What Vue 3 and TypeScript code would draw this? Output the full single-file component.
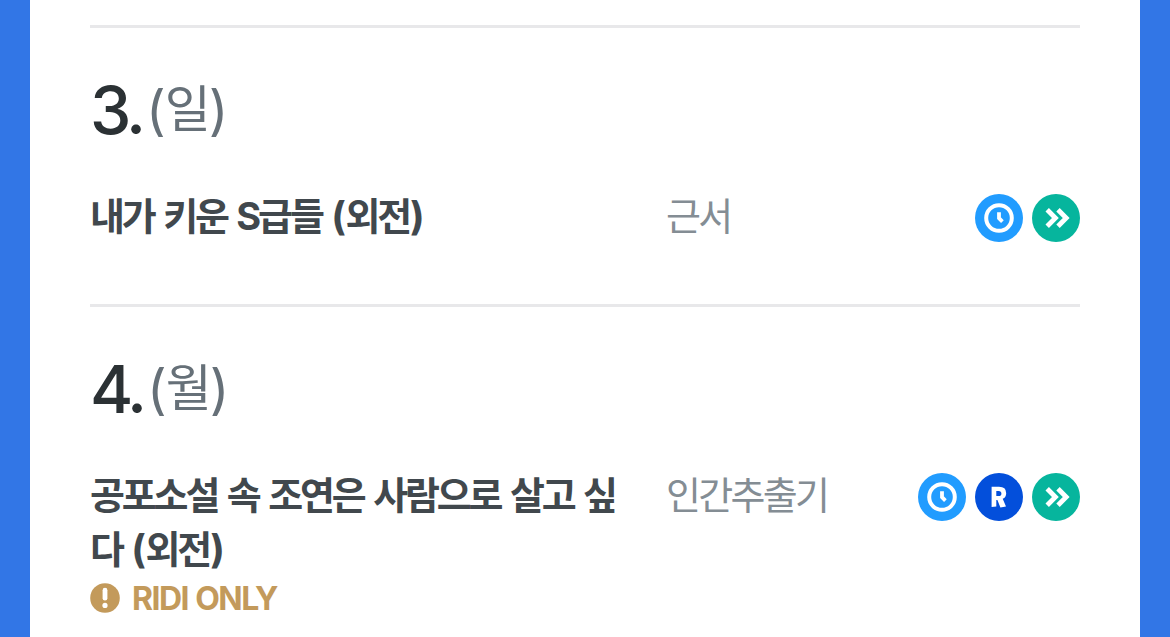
<script setup lang="ts">
type Platform = 'time' | 'ridi' | 'series'

interface Release {
  day: number
  weekday: string
  title: string
  part: string
  author: string
  platforms: Platform[]
  exclusive?: string
}

const releases: Release[] = [
  { day: 3, weekday: '일', title: '내가 키운 S급들', part: '외전', author: '근서', platforms: ['time', 'series'] },
  {
    day: 4,
    weekday: '월',
    title: '공포소설 속 조연은 사람으로 살고 싶다',
    part: '외전',
    author: '인간추출기',
    platforms: ['time', 'ridi', 'series'],
    exclusive: 'RIDI ONLY',
  },
]
</script>

<template>
  <main class="page">
    <section v-for="item in releases" :key="item.day" class="day">
      <h2 class="date">
        <span class="number">{{ item.day }}.</span>
        <span class="weekday"><span class="paren">(</span>{{ item.weekday }}<span class="paren">)</span></span>
      </h2>
      <div class="row">
        <div class="work">
          <h3 class="title">{{ item.title }} <span class="paren">(</span>{{ item.part }}<span class="paren">)</span></h3>
          <p v-if="item.exclusive" class="exclusive">
            <svg class="alert" viewBox="0 0 30 30" aria-hidden="true">
              <circle cx="15" cy="15" r="14.8" fill="#c39a5b" />
              <path d="M15 7.2V15.2" stroke="#fff" stroke-width="4.8" stroke-linecap="round" />
              <circle cx="15" cy="22.4" r="2.6" fill="#fff" />
            </svg>
            <span>{{ item.exclusive }}</span>
          </p>
        </div>
        <p class="author">{{ item.author }}</p>
        <div class="platforms">
          <svg v-for="p in item.platforms" :key="p" class="platform" viewBox="0 0 48 48" aria-hidden="true">
            <template v-if="p === 'time'">
              <circle cx="24" cy="24" r="24" fill="#219cff" />
              <circle cx="24" cy="24" r="12.8" fill="none" stroke="#fff" stroke-width="4" />
              <path d="M24 18.2V24.2L27.4 27.6" fill="none" stroke="#fff" stroke-width="3.8" />
            </template>
            <template v-else-if="p === 'ridi'">
              <circle cx="24" cy="24" r="24" fill="#034fdb" />
              <path d="M16.6 13.8H24Q31.2 13.8 31.2 20.2Q31.2 24.2 27.7 25.8L31 33.4L25.4 34.6L22.4 27H21.3V33.4L16.6 34ZM21.3 18V23.1H23.7Q26.4 23.1 26.4 20.5Q26.4 18 23.7 18Z" fill="#fff" fill-rule="evenodd" />
            </template>
            <template v-else>
              <circle cx="24" cy="24" r="24" fill="#06b59d" />
              <path d="M15.2 15.8L23.4 24L15.2 32.2M26 15.8L34.2 24L26 32.2" fill="none" stroke="#fff" stroke-width="4.8" />
            </template>
          </svg>
        </div>
      </div>
    </section>
  </main>
</template>

<style>
body {
  overflow: hidden;
}
</style>

<style scoped>
.page {
  box-sizing: border-box;
  height: 637px;
  padding: 25px 60px 0;
  border: solid #3276e6;
  border-width: 0 30px;
  background: #fff;
  overflow: hidden;
  font-family: Inter, "Noto Sans CJK KR", sans-serif;
}

.day {
  box-sizing: border-box;
  min-height: 279px;
  border-top: 3px solid #e8e8ea;
}

.date {
  display: flex;
  align-items: flex-start;
  height: 80px;
  margin: 42px 0 0;
  line-height: 80px;
  white-space: nowrap;
}

.number {
  color: #2b3134;
  font-size: 66px;
  font-weight: 500;
  letter-spacing: -4px;
}

.weekday {
  margin-left: 4px;
  color: #667078;
  font-size: 50px;
  font-weight: 400;
  letter-spacing: -2px;
  line-height: 78px;
}

.weekday .paren {
  font-size: 54px;
  font-weight: 400;
  letter-spacing: -1px;
  line-height: 1;
  vertical-align: -3px;
}

.row {
  display: grid;
  grid-template-columns: 576px 1fr auto;
  align-items: start;
  margin-top: 39px;
}

.title,
.author {
  margin: 0;
  font-size: 38px;
  line-height: 54px;
}

.title {
  width: 540px;
  color: #41484d;
  font-weight: 700;
  letter-spacing: -3.15px;
  word-spacing: 3.7px;
  word-break: break-all;
}

.title .paren {
  font-size: 39px;
  letter-spacing: -0.5px;
  line-height: 1;
}

.title .paren:last-child {
  margin-left: 1px;
}

.author {
  color: #848d94;
  font-weight: 400;
  letter-spacing: -2.7px;
}

.exclusive {
  display: flex;
  align-items: center;
  gap: 12px;
  height: 44px;
  margin: 0;
  color: #c39a5b;
  font-size: 32px;
  font-weight: 650;
  letter-spacing: -1.5px;
  word-spacing: 1px;
}

.alert {
  width: 30px;
  height: 30px;
}

.platforms {
  display: flex;
  gap: 9px;
  margin-top: 5px;
}

.platform {
  width: 48px;
  height: 48px;
}
</style>
